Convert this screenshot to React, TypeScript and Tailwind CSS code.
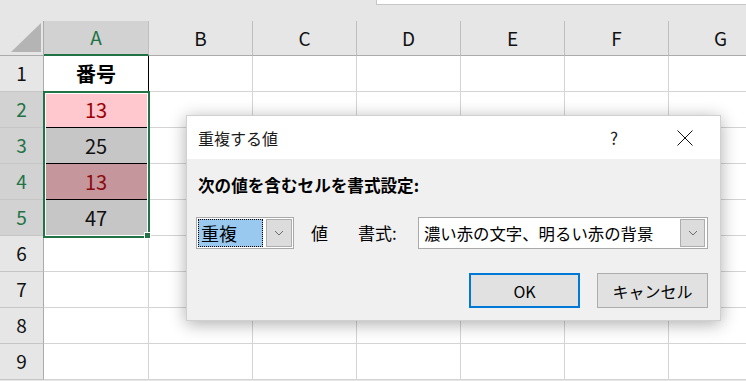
import React from 'react'

// Spreadsheet data (column A only has content)
const COLS = ['A', 'B', 'C', 'D', 'E', 'F', 'G']

interface CellSpec {
  text: string
  bg: string
  color: string
  bold?: boolean
  bottom?: boolean
}

const COLUMN_A: Record<number, CellSpec> = {
  1: { text: '番号', bg: 'bg-white', color: 'text-black', bold: true },
  2: { text: '13', bg: 'bg-[#ffc7ce]', color: 'text-[#9c0006]', bottom: true },
  3: { text: '25', bg: 'bg-[#c6c6c6]', color: 'text-[#111]', bottom: true },
  4: { text: '13', bg: 'bg-[#c5979c]', color: 'text-[#8a0a10]', bottom: true },
  5: { text: '47', bg: 'bg-[#c6c6c6]', color: 'text-[#111]' },
}

const SELECTED_ROWS = [2, 3, 4, 5]

function Chevron() {
  return (
    <svg width="10" height="6" viewBox="0 0 10 6" fill="none">
      <path d="M1 1 L5 5 L9 1" stroke="#6d6d6d" strokeWidth="1" />
    </svg>
  )
}

function Corner() {
  return (
    <div className="w-[44px] h-[35px] shrink-0 bg-[#e6e6e6] border-r border-b border-[#ababab] flex items-end justify-end pr-[2px] pb-[3px]">
      <svg width="30" height="29" viewBox="0 0 30 29">
        <polygon points="30,0 30,29 0,29" fill="#b4b4b4" />
      </svg>
    </div>
  )
}

function Dialog() {
  return (
    <div className="absolute left-[186px] top-[115px] w-[535px] h-[206px] flex flex-col border border-[#d0d0d0] shadow-[0_3px_16px_rgba(0,0,0,0.32)]">
      {/* Title bar */}
      <div className="h-[43px] bg-white flex items-center pl-[11px] pr-[12px]">
        <span className="flex-1 text-[16px] text-[#1a1a1a]">重複する値</span>
        <span className="w-[46px] text-center text-[17px] text-[#222]">?</span>
        <span className="w-[46px] ml-[25px] flex justify-center">
          <svg width="16" height="16" viewBox="0 0 16 16">
            <path d="M0.5 0.5 L15.5 15.5 M15.5 0.5 L0.5 15.5" stroke="#111" strokeWidth="1" />
          </svg>
        </span>
      </div>

      {/* Body */}
      <div className="flex-1 bg-[#f0f0f0] pl-[9px] pr-[12px] pt-[16px]">
        <div className="ml-[2px] text-[16.6px] leading-[20px] font-bold text-black">次の値を含むセルを書式設定:</div>

        <div className="mt-[22px] h-[32px] flex items-center">
          {/* Rule combo */}
          <div className="w-[98px] h-[32px] border border-[#a9a9a9] bg-white p-px flex">
            <div className="w-[65px] bg-[#99c9ef] border border-dotted border-black flex items-center pl-[2px] text-[18px] text-black">
              重複
            </div>
            <div className="ml-[3px] w-[26px] bg-[#dcdcdc] border border-[#adadad] flex items-center justify-center">
              <Chevron />
            </div>
          </div>

          <span className="ml-[17px] w-[17px] text-[17px] text-black">値</span>
          <span className="ml-[30px] w-[42px] text-[17px] text-black">書式:</span>

          {/* Format combo */}
          <div className="ml-[18px] w-[291px] h-[32px] border border-[#a9a9a9] bg-white flex items-center p-px">
            <span className="flex-1 pl-[4px] text-[16.4px] text-black">濃い赤の文字、明るい赤の背景</span>
            <div className="w-[25px] h-[28px] mr-px bg-[#dcdcdc] border border-[#adadad] flex items-center justify-center">
              <Chevron />
            </div>
          </div>
        </div>

        <div className="mt-[24px] flex justify-end gap-[17px]">
          <button className="w-[111px] h-[35px] bg-[#e1e1e1] border-2 border-[#0078d7] text-[16px] text-black">
            OK
          </button>
          <button className="w-[111px] h-[35px] bg-[#e1e1e1] border border-[#adadad] text-[16px] text-black">
            キャンセル
          </button>
        </div>
      </div>
    </div>
  )
}

export default function App() {
  return (
    <div
      className="relative w-[746px] h-[381px] overflow-hidden bg-[#e6e6e6]"
      style={{ fontFamily: '"Noto Sans CJK JP", "Noto Sans", sans-serif' }}
    >
      {/* Formula bar edge */}
      <div className="h-[21px] flex justify-end">
        <div className="w-[370px] h-[5px] bg-white border-l border-b border-[#c6c6c6]" />
      </div>

      {/* Column headers */}
      <div className="flex">
        <Corner />
        {COLS.map((c, i) => (
          <div
            key={c}
            className={`shrink-0 h-[35px] flex items-center justify-center text-[19px] border-r border-[#bfbfbf] ${
              i === 0
                ? 'w-[105px] bg-[#d2d2d2] border-b-2 border-b-[#217346] text-[#217346]'
                : 'w-[104px] bg-[#e6e6e6] border-b border-b-[#ababab] text-[#111]'
            }`}
          >
            {c}
          </div>
        ))}
      </div>

      {/* Rows */}
      {Array.from({ length: 9 }, (_, r) => r + 1).map(row => {
        const selected = SELECTED_ROWS.includes(row)
        const a = COLUMN_A[row]
        return (
          <div key={row} className="flex h-[36px]">
            <div
              className={`w-[44px] shrink-0 flex items-center justify-center text-[19px] border-r border-r-[#ababab] border-b border-b-[#c6c6c6] ${
                selected ? 'bg-[#d2d2d2] text-[#217346]' : 'bg-[#e6e6e6] text-[#111]'
              }`}
            >
              {row}
            </div>
            {COLS.map((c, i) => {
              if (i === 0 && a) {
                return (
                  <div
                    key={c}
                    className={`w-[105px] shrink-0 flex items-center justify-center text-[20px] border-r border-r-black ${
                      a.bottom ? 'border-b border-b-black' : 'border-b border-b-[#d4d4d4]'
                    } ${a.bg} ${a.color} ${a.bold ? 'font-bold' : ''}`}
                  >
                    {a.text}
                  </div>
                )
              }
              return (
                <div
                  key={c}
                  className={`${i === 0 ? 'w-[105px]' : 'w-[104px]'} shrink-0 bg-white border-r border-b border-[#d4d4d4]`}
                />
              )
            })}
          </div>
        )
      })}

      {/* Selection border over A2:A5 */}
      <div className="absolute left-[43px] top-[91px] w-[107px] h-[147px] border-2 border-[#217346] shadow-[inset_0_0_0_1px_#ffffff]" />
      <div className="absolute left-[144px] top-[232px] w-[7px] h-[7px] bg-[#217346] border border-white" />

      <Dialog />
    </div>
  )
}
